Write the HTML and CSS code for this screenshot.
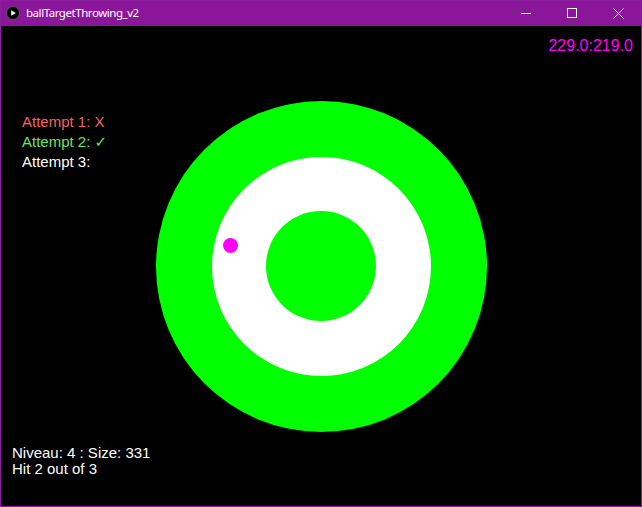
FILE: index.html
```html
<!DOCTYPE html>
<html>
<head>
<meta charset="utf-8">
<link rel="stylesheet" href="styles.css">
<title>ballTargetThrowing_v2</title>
</head>
<body>
<div class="window">
  <div class="titlebar">
    <svg class="app-icon" width="14" height="14" viewBox="0 0 14 14">
      <circle cx="7" cy="7" r="6.5" fill="#000" stroke="#555" stroke-width="1"/>
      <path d="M5.2 4.2 L9.8 7 L5.2 9.8 Z" fill="#fff"/>
    </svg>
    <span class="title">ballTargetThrowing_v2</span>
    <div class="controls">
      <span class="ctl">
        <svg width="10" height="10" viewBox="0 0 10 10"><path d="M0 5.5 H10" stroke="#fff" stroke-width="1"/></svg>
      </span>
      <span class="ctl">
        <svg width="10" height="10" viewBox="0 0 10 10"><rect x="0.5" y="0.5" width="9" height="9" fill="none" stroke="#fff" stroke-width="1"/></svg>
      </span>
      <span class="ctl">
        <svg width="11" height="11" viewBox="0 0 11 11"><path d="M0.5 0.5 L10.5 10.5 M10.5 0.5 L0.5 10.5" stroke="#fff" stroke-width="1"/></svg>
      </span>
    </div>
  </div>
  <div class="canvas">
    <div class="ring outer">
      <div class="ring middle">
        <div class="ring inner"></div>
      </div>
    </div>
    <div class="dot"></div>
    <div class="coords">229.0:219.0</div>
    <div class="attempts">
      <div class="miss">Attempt 1: X</div>
      <div class="hit">Attempt 2: <span class="check">✓</span></div>
      <div class="pending">Attempt 3:</div>
    </div>
    <div class="status">
      <div>Niveau: 4 : Size: 331</div>
      <div>Hit 2 out of 3</div>
    </div>
  </div>
</div>
</body>
</html>
```

FILE: styles.css
```css
html, body {
  margin: 0;
  padding: 0;
  background: #000;
}

.window {
  width: 640px;
  height: 505px;
  border: 1px solid #8a1d9c;
  display: flex;
  flex-direction: column;
  background: #000;
}

.titlebar {
  height: 25px;
  background: #8a1799;
  display: flex;
  align-items: center;
  flex-shrink: 0;
}

.app-icon {
  margin-left: 5px;
  margin-top: -1px;
}

.title {
  margin-left: 6px;
  color: #fff;
  font-family: "Noto Sans", "DejaVu Sans", sans-serif;
  font-size: 11.5px;
  letter-spacing: -0.45px;
  margin-top: -2px;
}

.controls {
  margin-left: auto;
  display: flex;
  height: 100%;
}

.ctl {
  width: 46px;
  display: flex;
  align-items: center;
  justify-content: center;
  margin-top: -1px;
}

.canvas {
  position: relative;
  width: 640px;
  height: 480px;
  background: #000;
  display: grid;
  place-items: center;
  overflow: hidden;
  font-family: "Liberation Sans", Arial, "DejaVu Sans", sans-serif;
}

.ring {
  border-radius: 50%;
  background: #00ff00;
  display: flex;
  align-items: center;
  justify-content: center;
}

.outer {
  width: 331px;
  height: 331px;
}

.middle {
  width: 219px;
  height: 219px;
  background: #fff;
}

.inner {
  width: 110px;
  height: 110px;
}

.dot {
  position: absolute;
  left: 222px;
  top: 212px;
  width: 15px;
  height: 15px;
  border-radius: 50%;
  background: #ff00ff;
}

.coords {
  position: absolute;
  right: 8px;
  top: 11px;
  color: #ff00ff;
  font-size: 16px;
}

.attempts {
  position: absolute;
  left: 21px;
  top: 86px;
  font-size: 15px;
  line-height: 20px;
}

.miss { color: #f06464; }
.hit { color: #64e664; }
.pending { color: #fff; }

.check {
  font-family: "DejaVu Sans", sans-serif;
  font-weight: bold;
}

.status {
  position: absolute;
  left: 11px;
  top: 419px;
  font-size: 15px;
  line-height: 16px;
  color: #fff;
}
```
